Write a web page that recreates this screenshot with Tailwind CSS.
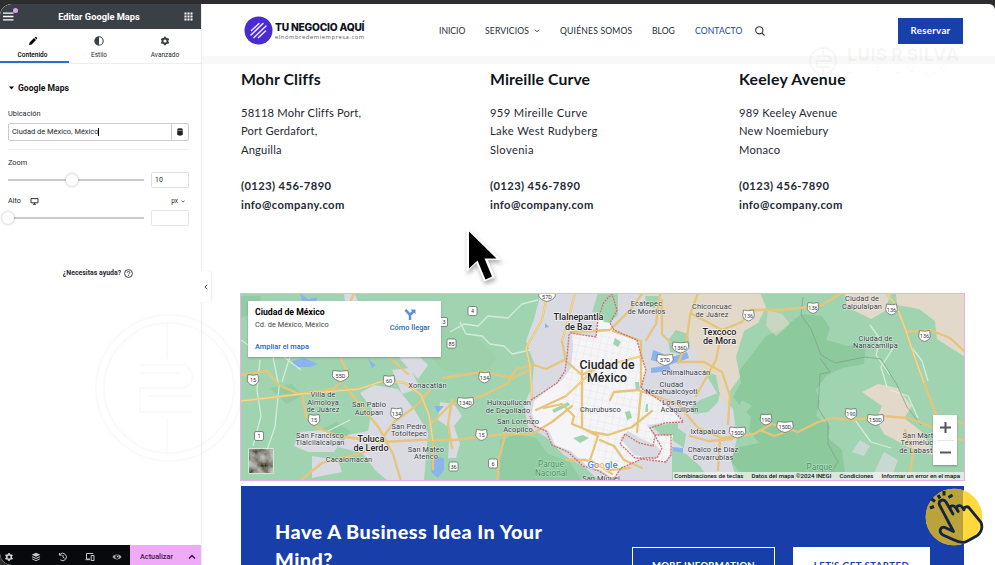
<!DOCTYPE html>
<html lang="es">
<head>
<meta charset="utf-8">
<title>Editar Google Maps</title>
<script src="https://cdn.jsdelivr.net/npm/@tailwindcss/browser@4"></script>
</head>
<body class="bg-[#2d2d2f] overflow-hidden">
<div class="relative w-[995px] h-[565px] overflow-hidden font-['Roboto',sans-serif] flex flex-col pt-1">
<div class="flex flex-1 min-h-0 rounded-l-[12px] rounded-tr-[6px] overflow-hidden bg-white">

<!-- Editor panel -->
<aside class="w-[201px] shrink-0 flex flex-col bg-white text-[#26292d] text-[7px] mt-[-4px]">
  <header class="h-[29px] shrink-0 bg-[#3b4046] rounded-tl-[12px] flex items-center justify-between pl-[3px] pr-2 pt-1 text-white">
    <svg class="w-[11px] h-[9px]" viewBox="0 0 11 9" stroke="#fff" stroke-width="1.3"><path d="M0 1.2h10.500M0 4.500h10.500M0 7.800h10.500"/></svg>
    <h1 class="text-[9.300px] font-bold leading-none">Editar Google Maps</h1>
    <svg class="w-[9px] h-[9px]" viewBox="0 0 9 9" fill="#fff"><path d="M.5.5h2v2h-2zM3.500.5h2v2h-2zM6.500.5h2v2h-2zM.5 3.500h2v2h-2zM3.500 3.500h2v2h-2zM6.500 3.500h2v2h-2zM.5 6.500h2v2h-2zM3.500 6.500h2v2h-2zM6.500 6.500h2v2h-2z"/></svg>
  </header>
  <nav class="h-[35px] shrink-0 grid grid-cols-[69px_60px_72px] border-b border-[#eeeeef] text-[6.500px] text-center">
    <div class="border-b-2 border-[#2f6fcb] flex flex-col items-center pt-[7px] gap-[5px] font-medium text-black pr-1">
      <svg class="w-[10px] h-[10px]" viewBox="0 0 10 10"><path d="M1 9l.6-2.600L6 2l2 2-4.400 4.400zM6.600 1.400l.6-.5c.4-.3.7-.3 1 0l.9.9c.3.3.3.7 0 1l-.6.6z"/></svg><span class="leading-[8px]">Contenido</span></div>
    <div class="flex flex-col items-center pt-[7px] gap-[5px]">
      <svg class="w-[10px] h-[10px]" viewBox="0 0 10 10"><circle cx="5" cy="5" r="4.200" fill="#fff" stroke="#3b4046" stroke-width="1.100"/><path d="M5 .8a4.200 4.200 0 0 0 0 8.400z" fill="#3b4046"/></svg><span class="leading-[8px]">Estilo</span></div>
    <div class="flex flex-col items-center pt-[7px] gap-[5px]">
      <svg class="w-[10px] h-[10px]" viewBox="0 0 10 10" fill="none" stroke="#3b4046"><circle cx="5" cy="5" r="2.500" stroke-width="1.900"/><path d="M5 .8v1.500M5 7.700v1.500M1.300 2.900l1.300.75M7.400 6.400l1.300.75M1.300 7.150l1.300-.75M7.400 3.650l1.300-.75" stroke-width="1.900"/></svg><span class="leading-[8px]">Avanzado</span></div>
  </nav>
  <section class="pl-2 pr-3 flex flex-col">
    <h2 class="mt-[19px] flex items-center gap-[3px] text-[8.600px] font-bold leading-[10px] text-[#111]"><svg class="w-[7px] h-[4px]" viewBox="0 0 7 4"><path d="M1 .5h5L3.500 3.500z"/></svg>Google Maps</h2>
    <label class="mt-[16px] leading-[9px] text-[7.400px]">Ubicación</label>
    <div class="mt-[5px] h-[18px] flex border border-[#c9cbcf] rounded-[2px]">
      <div class="flex-1 flex items-center pl-[3px] text-[7.450px] whitespace-nowrap">Ciudad de México, México<span class="w-px h-[8px] bg-black"></span></div>
      <div class="w-[17px] border-l border-[#c9cbcf] flex items-center justify-center">
        <svg class="w-[6px] h-[8px]" viewBox="0 0 6 8" fill="#222"><ellipse cx="3" cy="1.400" rx="2.800" ry="1.200"/><path d="M.2 2.300c1 .9 4.600.9 5.600 0v4.300c-.4 1.500-5.200 1.500-5.600 0z"/></svg></div>
    </div>
    <div class="mt-[8px] border-t border-[#f0f0f1]"></div>
    <label class="mt-[8px] leading-[9px] text-[7.400px]">Zoom</label>
    <div class="mt-[5px] h-[16px] flex items-center gap-[7px]">
      <div class="w-[136px] h-[2px] bg-[#cbcbcc] flex items-center pl-[58px]"><span class="w-[12px] h-[12px] shrink-0 rounded-full bg-white shadow-[0_0_3px_rgba(0,0,0,.32)]"></span></div>
      <div class="flex-1 h-[16px] border border-[#dedfe1] rounded-[2px] flex items-center pl-[3px] text-[7px]">10</div>
    </div>
    <div class="mt-[8px] h-[11px] flex items-center text-[7.300px]"><span>Alto</span>
      <svg class="ml-[9px] w-[9px] h-[7px]" viewBox="0 0 9 7" fill="none" stroke="#333"><path d="M1 .6h7v4.200H1zM3 6.300h3M4.500 5v1.300"/></svg>
      <span class="ml-auto mr-[4px] text-[6.500px] flex items-center gap-[3px]">px <svg class="w-[4px] h-[3px]" viewBox="0 0 4 3" fill="none" stroke="#333" stroke-width=".8"><path d="M.5.7L2 2.100 3.500.7"/></svg></span></div>
    <div class="mt-[3px] h-[16px] flex items-center gap-[7px]">
      <div class="w-[136px] h-[2px] bg-[#cbcbcc] flex items-center"><span class="ml-[-6px] w-[12px] h-[12px] shrink-0 rounded-full bg-white shadow-[0_0_3px_rgba(0,0,0,.32)]"></span></div>
      <div class="flex-1 h-[16px] border border-[#e4e5e7] rounded-[2px]"></div>
    </div>
  </section>
  <div class="mt-[42px] flex items-center justify-center gap-[3px] text-[6.950px] font-bold pr-[5px] leading-[10px]">¿Necesitas ayuda?
    <svg class="w-[9px] h-[9px]" viewBox="0 0 9 9" fill="none" stroke="#333" stroke-width=".9"><circle cx="4.500" cy="4.500" r="3.900"/><path d="M3.200 3.700c0-1.700 2.600-1.600 2.600 0 0 .9-1.300.9-1.300 1.700M4.500 6v.9"/></svg></div>
  <footer class="mt-auto h-[20px] bg-[#08090c] rounded-bl-[8px] flex overflow-hidden">
    <div class="w-[130px] flex items-center gap-[17px] pl-[4px] pt-[4px]">
      <svg class="w-[10px] h-[10px] shrink-0" viewBox="0 0 10 10" fill="none" stroke="#d5d8dc"><circle cx="5" cy="5" r="2.300" stroke-width="1.500"/><path d="M5 1v1.500M5 7.500V9M1.500 3l1.300.75M7.200 6.250l1.300.75M1.500 7l1.300-.75M7.200 3.750L8.500 3" stroke-width="1.600"/></svg>
      <svg class="w-[10px] h-[10px] shrink-0" viewBox="0 0 10 10" fill="#c5c8cc"><path d="M5 .8l4.300 2L5 4.800.7 2.800zM1.500 4.300L5 6l3.500-1.700.8.6L5 7 .7 4.900zM1.500 6.500L5 8.200l3.500-1.700.8.6L5 9.300.7 7.100z"/></svg>
      <svg class="w-[10px] h-[10px] shrink-0" viewBox="0 0 10 10" fill="none" stroke="#c5c8cc"><path d="M2 2.500A3.700 3.700 0 1 1 2.300 7.800M1.500 1v2.200h2.200M5 3v2.300l1.500 1"/></svg>
      <svg class="w-[10px] h-[10px] shrink-0" viewBox="0 0 10 10" fill="none" stroke="#c5c8cc"><path d="M8 2V1.500H1.500v5.500H5M.5 7.700H5M6.200 3.500h2.800v5H6.200z"/></svg>
      <svg class="w-[10px] h-[10px] shrink-0" viewBox="0 0 10 10"><path d="M.5 5C2.500 1.800 7.500 1.800 9.500 5 7.500 8.200 2.500 8.200.5 5z" fill="#a9acb0"/><circle cx="5" cy="5" r="1.900" fill="#17181a"/><circle cx="5.500" cy="4.500" r=".8" fill="#bbb"/></svg>
    </div>
    <div class="flex-1 bg-[#efabf7] flex items-center text-[7.300px] font-medium text-[#3b1743] pt-[4px]"><span class="w-[53px] text-center">Actualizar</span>
      <svg class="ml-[5px] w-[8px] h-[6px]" viewBox="0 0 8 6" fill="none" stroke="#3b1743" stroke-width="1.500"><path d="M1 4.500l3-3 3 3"/></svg></div>
  </footer>
</aside>

<!-- Site preview -->
<main class="flex-1 min-w-0 flex flex-col border-l border-[#ececef] font-['Lato',sans-serif] text-[#1f2933]">
  <header class="h-[52px] shrink-0 flex items-center pl-[42px] pr-8">
    <svg class="w-[29px] h-[29px] shrink-0" viewBox="0 0 29 29"><circle cx="14.500" cy="14.500" r="14" fill="#4a2bd0"/><g stroke="#efeafc" stroke-width="1.500" stroke-linecap="round"><path d="M7.500 14.500l7.500-7M7 19L19 7.500M10 21.500L22 10M14.500 21.500l7-6.500"/></g></svg>
    <div class="ml-[2px] w-[91px] whitespace-nowrap">
      <div class="mt-px text-[10.200px] font-extrabold leading-[12px] text-[#0d1220] tracking-[-0.2px] font-['Inter',sans-serif]">TU NEGOCIO AQUÍ</div>
      <div class="text-[5.800px] leading-[8px] tracking-[0.560px] text-[#555] font-['Open_Sans',sans-serif]">elnombredemiempresa.com</div>
    </div>
    <nav class="mt-[2px] ml-[73px] flex items-center text-[8.600px] leading-none text-[#252c34] whitespace-nowrap">
      <span class="w-[46px]">INICIO</span>
      <span class="w-[75px] flex items-center gap-[5px] tracking-[.15px]">SERVICIOS <svg class="w-[6px] h-[4px]" viewBox="0 0 6 4" fill="none" stroke="#444"><path d="M1 .8l2 2 2-2"/></svg></span>
      <span class="w-[92px] tracking-[.18px]">QUIÉNES SOMOS</span><span class="w-[43px]">BLOG</span><span class="w-[60px] tracking-[.1px] text-[#1b46ad]">CONTACTO</span>
      <svg class="w-[10px] h-[10px]" viewBox="0 0 10 10" fill="none" stroke="#333" stroke-width="1.100"><circle cx="4.300" cy="4.300" r="3.600"/><path d="M7 7l2.500 2.500"/></svg>
    </nav>
    <div class="mt-px ml-auto w-[65px] h-[26px] bg-[#1840ab] text-white font-bold text-[9.700px] tracking-[.3px] flex items-center justify-center">Reservar</div>
  </header>
  <div class="h-[8px] shrink-0 bg-[#f8f8f9]"></div>

  <section class="h-[229px] shrink-0 pl-[39px] grid grid-cols-[249px_249px_1fr] content-start text-[11.200px] leading-[18.400px] tracking-[.16px]">
    <div><h2 class="mt-[5px] mb-[15px] text-[15.800px] leading-[20px] font-bold tracking-[.1px] text-[#10151c]">Mohr Cliffs</h2><p>58118 Mohr Cliffs Port,<br>Port Gerdafort,<br>Anguilla</p><p class="mt-[18px] font-bold tracking-[.4px]">(0123) 456-7890<br>info@company.com</p></div>
    <div><h2 class="mt-[5px] mb-[15px] text-[15.800px] leading-[20px] font-bold tracking-[.1px] text-[#10151c]">Mireille Curve</h2><p class="tracking-[.38px]">959 Mireille Curve<br>Lake West Rudyberg<br>Slovenia</p><p class="mt-[18px] font-bold tracking-[.4px]">(0123) 456-7890<br>info@company.com</p></div>
    <div><h2 class="mt-[5px] mb-[15px] text-[15.800px] leading-[20px] font-bold tracking-[.25px] text-[#10151c]">Keeley Avenue</h2><p class="tracking-[.22px]">989 Keeley Avenue<br>New Noemiebury<br>Monaco</p><p class="mt-[18px] font-bold tracking-[.4px]">(0123) 456-7890<br>info@company.com</p></div>
  </section>

  <!-- Map: user units are window pixels -->
  <section class="relative ml-[38px] w-[725px] h-[188px] shrink-0 overflow-hidden font-['Roboto',sans-serif]">
    <svg class="block w-[725px] h-[188px]" viewBox="240 293 725 188">
      <defs>
        <pattern id="streets" width="7" height="7" patternUnits="userSpaceOnUse" patternTransform="rotate(12)"><path d="M0 0h7M0 0v7" stroke="#dedfe4" stroke-width=".7"/></pattern>
        <filter id="grain" x="0" y="0" width="1" height="1"><feTurbulence type="fractalNoise" baseFrequency=".13" numOctaves="3" seed="4"/><feColorMatrix values=".8 0 0 0 -.1 .8 0 0 0 -.11 .8 0 0 0 -.14 0 0 0 0 1"/></filter>
        <path id="sh" d="M-5-5.500q5 1.500 10 0l.8 5.500q-.5 4-5.800 5.500q-5.300-1.500-5.800-5.500z" fill="#fff" stroke="#66706a" stroke-width=".8"/>
        <path id="shw" d="M-7.500-5.500q7.500 1.500 15 0l.8 5.500q-2 4-8.300 5.500q-6.300-1.500-8.300-5.500z" fill="#fff" stroke="#66706a" stroke-width=".8"/>
        <rect id="sq" x="-4.500" y="-4.500" width="9" height="9" rx="1.500" fill="#fff" stroke="#66706a" stroke-width=".8"/>
      </defs>
      <rect x="240" y="293" width="725" height="188" fill="#a0d4b0"/>
      <g fill="#8cc99c">
        <path d="M766 336l14-6 22-16 20 2 8 12-4 12 22 6 18-2-2 20-22 4-16 8-10 14 4 12-4 14 14 10-2 12 14 12 4 31H735l4-10-10-12 10-12 20-4-10-12 2-14-8-8-10-12 8-14-2-12z"/>
        <path d="M500 440l18-6 18 4 12 16 22 8 12 19h-82zM270 388l22-4 10 12-16 8zM315 432l22-10 14 10-14 12zM241 296l20 0-4 16-16 6z" opacity=".7"/>
        <path d="M410 330l35-4 28 8 25 24-18 18-38-6z" opacity=".2"/>
      </g>
      <g fill="#d9dae2">
        <path d="M541 293h122l12 22 28 12 14 24-12 22 12 20 16 16 4 30-6 22 6 20H600l-16-14-20-12-18-18-18-10-4-22 8-18 2-24-8-22 8-22z"/>
        <path d="M360 393l14-8 24 4 16 20 14 24-4 48h-36l-12-10-14-18-24-6 10-12 20-4 4-22zM392 370l18-2 10 20-18 6zM300 432l22-2 20 10-8 12-26 0-14-6zM440 402l14 2 8 12-8 10 6 18-4 14h-8l2-30-12-8zM344 293h10l6 12-14 6zM312 456l26 4 4 12-30 6zM396 343l18 8 14 14-10 14-18-20z"/>
        <path d="M884 452l14 8-8 21h-20zM860 440l10 6-6 10-12-4z" opacity=".7"/>
      </g>
      <g fill="#e2d9ca">
        <path d="M642 293h118l6 14-8 16-14 8-8 26 4 20-10 14-2 16-8-10-4-22-14-4-6-20-12-14-20-8-12-16z"/>
        <path d="M845 293h46l-6 18-14 8-24-12zM896 293h69v64l-28-18-2-18-16-12-22-4zM862 392l16-8 20 4 14 18-8 12 18 14 14 24-26-8-26-14-8-14 6-14z"/>
        <path d="M768 310l14 4 8 10-14 12-10-10z" opacity=".6"/>
      </g>
      <g fill="#a0d4b0"><path d="M598 293l20 0 0 22-8 7-6-8-12-2zM668 340l8-10 12 4 2 12-10 8-10-2zM690 408l10-8 20-8-2 10-10 10-14 2zM652 426l20-2 14 10-2 14-12-8-12-6zM672 450l14 4 14 12 10 15-38 0zM645 296l14 0-4 12-8-2zM742 400l10 6-8 8-6-6z"/></g>
      <path d="M572 334l24 3 2-18 6-17 8-8 5 16-7 13 4 7 23 10 4 15 5 15-5 18 29 19 13 13-36 5 6 10 20 0-3 20-6 7-23-3-22 10-5 10-13-9-15-5-15-14-16-6-6-14-13-6-4-12 2-12 16-13 12-8 9-12 2-22z" fill="#f5f5f7"/>
      <path d="M604 302l8-8 5 16-7 13-6-1-5-4z" fill="#a0d4b0"/>
      <path d="M572 334l24 3 17-7 24 10 4 15 5 15-5 18 29 19 13 13-36 5 6 10 20 0-3 20-6 7-23-3-22 10-18-9-40-60 10-42z" fill="url(#streets)"/>
      <path d="M541 293h55l-4 38-24 9-6 40-30 18 2-60z" fill="url(#streets)" opacity=".4"/>
      <g fill="#a0d4b0"><path d="M615 338l6 4-3 5-5-3zM635 382l4 0 1 9-4 0zM573 438l10-3 6 3-9 5zM646 404l2 0 0 8-3 0zM552 410l16-8 2 3-16 8zM625 412l5-1 2 7-5 2zM662 425l16-2 0 6-12 2z"/></g>
      <path d="M620 438l8-7 14 8 14 6 6 8-8 6-20-4z" fill="#dadae2"/>
      <g fill="#8ab4ec"><path d="M292 361l12-3 14 6-8 3-15 0zM368 359l8 6-4 3zM434 406l10 0-6 7zM432 456l12 2 0 12-6 8-7-6zM653 350l8 3 8 5 18-6 2 6-20 7-18-5zM651 368l18-3 2 6-20 2zM672 447l11 1 0 5-10-2zM300 293l8 6 10-2-2 4-14 0zM545 323l4 4-4 1z"/></g>
      <g fill="none" stroke="#e6f3ea" stroke-width="1.300" opacity=".75" stroke-linejoin="round">
        <path d="M260 360l-3 30 4 26-8 30M273 357l6 30-4 40-14 40M292 350l-10 32M450 332l14-8 14 2 10-10 20 2 14-14 16-4M460 322l6 12 16 2 8 8 14 2 8 8 18-4M870 325l10 14-4 16 14 20M895 345l-14 22 6 20M910 345l12 16 6 20M890 390l18 6 10 22M855 420l16 22 20 6M241 340l20 14 22 2 18 14M350 420l-40 20"/>
      </g>
      <g fill="none" stroke="#84a08d" stroke-width=".8"><path d="M803 297l-2 18 10 14 10 26 14 8 30-6 16 2 16 26 10 22 14 18M820 358l10 14-10 2-2 34 10 16 0 20 10 18-8 12"/></g>
      <g fill="none" stroke="#e6c57a" stroke-width="2.300" stroke-linejoin="round" stroke-linecap="round">
        <path d="M241 375l26-4 12 14 20 9 60-5 24-8 22 2 16 12 8 20 4 26 0 28M241 401l60-7 32-5 16-14-8-16-2-10M302 394l4 22 12 12 20 8 44 6 38-2 34 0 50-6 28 0 20-12 20-16"/>
        <path d="M345 386l16 20 18 22 14 26 8 27M430 390l-14 16-22 16-10 14M300 481l22-18 40-10 20-8M354 293l-8 20M388 356l20 18M430 425l20-20 34-10 24-12 8-14 18-4 12 4 20-10M443 378l40-6 30 6 16-8 4-4"/>
        <path d="M546 300l-4 20-16 28 4 18 2 34M575 293l-6 24-7 24 4 20 16 14 12-6M536 410l30-14 30-28 46-12M544 408l18-4 12 12-2 8 20 8 16 3 24-8 20-16M582 368l0 30 0 30 16 8-8 24 22 14"/>
        <path d="M570 332l40-2 20-20 12-16M613 331l28 10 0 46M641 392l-4 40M610 400l4-8 24-2 40 14 20 24 24 10 32-4 18-10 26 8 20-10 14-4 20 2 30-4 26 2 22 8 22 12 20 4 25 0M690 436l18 5 24-2 10-8M646 340l10-16 4-30M662 300l0 34 8 8M600 440l14 6 10 14 18 8"/>
        <path d="M698 293l-8 22-4 30-8 18M692 314l30 16-6 30-20 36M680 362h24l18 10 8 24-2 28M722 330l20-8 8-12 30 0 40-4 20-12 16-3M760 430l14 6 18-6M886 293l10 12 10 26 8 24 10 28 14 36M906 332l24-2 20 8 15 14M905 430l8 24-4 27M945 418l20 6M720 440l-2 30M566 460l20 0 24 10 20-2M505 435l-6 24-2 22M452 400l-4 24 4 24"/>
      </g>
      <g fill="none" stroke="#f7da98" stroke-width="1"><path d="M566 396l30-28 46-12M546 300l-4 20-16 28 4 18 2 34M575 293l-6 24-7 24M383 381l22 2 16 12 8 20 4 26M886 293l10 12 10 26 8 24 10 28M241 401l60-7 58-5 24-8"/></g>
      <path d="M531 400l14-9 12-8 8-12 2-14 2-22 2-2 25 4 2-18 6-17 8-8 5 16-7 13 4 7 23 10 4 15 5 15-5 18 29 19 13 14M683 422l-18 1-15 5 5 7 16 0 0 20-5 7-24-3-21 9-8 12-14-9-16-5-15-14-16-7-6-14-12-5-4-10M620 444l5-10 14 9 14 3 2-10 7 12-5 10-22 0z" fill="none" stroke="#cf6f6f" stroke-width="1.300" stroke-dasharray="2 1"/>

      <g font-size="5.500" text-anchor="middle" fill="#333">
        <use href="#sh" x="253" y="380"/><text x="253" y="382">15</text>
        <use href="#shw" x="340.500" y="376"/><text x="340.500" y="378">55D</text>
        <use href="#sh" x="389" y="381"/><text x="389" y="383">60</text>
        <use href="#sh" x="314" y="420"/><text x="314" y="422">15</text>
        <use href="#sh" x="396.500" y="413.500"/><text x="396.500" y="415.500">134</text>
        <use href="#sq" x="259" y="436"/><text x="259" y="438">1</text>
        <use href="#sq" x="472.500" y="311"/><text x="472.500" y="313">4</text>
        <use href="#sq" x="443" y="322"/><text x="444" y="324">3</text>
        <use href="#sq" x="451.500" y="343.500"/><text x="451.500" y="345.500">85</text>
        <use href="#sh" x="484.500" y="377.500"/><text x="484.500" y="379.500">134</text>
        <use href="#shw" x="465.500" y="403"/><text x="465.500" y="405">134D</text>
        <use href="#sh" x="481.500" y="435"/><text x="481.500" y="437">15</text>
        <use href="#sq" x="453.500" y="466.500"/><text x="453.500" y="468.500">36</text>
        <use href="#sq" x="493" y="463.500"/><text x="493" y="465.500">6</text>
        <use href="#shw" x="547" y="296"/><text x="547" y="299">57D</text>
        <use href="#sh" x="748.500" y="315.500"/><text x="748.500" y="317.500">136</text>
        <use href="#shw" x="680.500" y="347.500"/><text x="680.500" y="349.500">136D</text>
        <use href="#shw" x="665" y="360"/><text x="665" y="362">57D</text>
        <use href="#sh" x="766" y="419.500"/><text x="766" y="421.500">190</text>
        <use href="#shw" x="737.500" y="432.500"/><text x="737.500" y="434.500">150D</text>
        <use href="#shw" x="785" y="427"/><text x="785" y="429">150D</text>
        <use href="#sh" x="813" y="308"/><text x="813" y="310">136</text>
        <use href="#sh" x="891.500" y="309.500"/><text x="891.500" y="311.500">136</text>
        <use href="#sh" x="924.500" y="336"/><text x="924.500" y="338">136</text>
        <use href="#sh" x="851" y="414"/><text x="851" y="416">190</text>
        <use href="#shw" x="875.500" y="420"/><text x="875.500" y="422">150D</text>
      </g>
      <g font-size="7.400" text-anchor="middle" fill="#33383d" stroke="#fff" stroke-opacity=".6" stroke-width="1.200" stroke-linejoin="round" paint-order="stroke" letter-spacing=".12">
        <text x="427.500" y="387.500">Xonacatlán</text>
        <text x="323" y="397">Villa de</text><text x="323" y="404.500">Almoloya</text><text x="323" y="412">de Juárez</text>
        <text x="369" y="407">San Pablo</text><text x="369" y="414.500">Autopan</text>
        <text x="409" y="428.500">San Pedro</text><text x="409" y="436">Totoltepec</text>
        <text x="320" y="437.500">San Francisco</text><text x="320" y="445">Tlalcilalcalpan</text>
        <text x="349" y="462">Cacalomacán</text>
        <text x="426" y="451.500">San Mateo</text><text x="426" y="459">Atenco</text>
        <text x="509" y="405">Huixquilucan</text><text x="508" y="412.500">de Degollado</text>
        <text x="518" y="424">San Lorenzo</text><text x="518" y="431.500">Acopilco</text>
        <text x="600.500" y="411.500">Churubusco</text><text x="601" y="481">San Miguel</text>
        <text x="646.500" y="306">Ecatepec</text><text x="646.500" y="313.500">de Morelos</text>
        <text x="712" y="309">Chiconcuac</text><text x="712" y="316.500">de Juárez</text>
        <text x="686" y="374.500">Chimalhuacán</text>
        <text x="671.500" y="386.500">Ciudad</text><text x="671.500" y="394">Nezahualcóyotl</text>
        <text x="679.500" y="404.500">Los Reyes</text><text x="679.500" y="412">Acaquilpan</text>
        <text x="708" y="433.500">Ixtapaluca</text>
        <text x="713" y="452">Chalco de Díaz</text><text x="713" y="459.500">Covarrubias</text>
        <text x="862" y="301">Ciudad de</text><text x="862" y="308.500">Calpulalpan</text>
        <text x="875.500" y="340.500">Ciudad de</text><text x="875.500" y="348">Nanacamilpa</text>
        <text x="921" y="437.500">San Martín</text><text x="921" y="445">Texmelucan</text><text x="921" y="452.500">de Labastida</text>
      </g>
      <g font-size="8.200" text-anchor="middle" fill="#3d8a58" stroke="#c5ead0" stroke-width=".8" paint-order="stroke"><text x="551" y="467">Parque</text><text x="551" y="476">Nacional</text><text x="819.500" y="470">Parque</text></g>
      <g font-size="9" font-weight="500" text-anchor="middle" fill="#202124" stroke="#fff" stroke-opacity=".75" stroke-width="1.500" paint-order="stroke">
        <text x="578.500" y="320">Tlalnepantla</text><text x="578.500" y="329.500">de Baz</text>
        <text x="719.500" y="334.500">Texcoco</text><text x="719.500" y="344">de Mora</text>
        <text x="371" y="441.500">Toluca</text><text x="371" y="451">de Lerdo</text>
        <text x="607" y="369" font-size="12.300">Ciudad de</text><text x="607" y="381.500" font-size="12.300">México</text>
      </g>
      <text x="602.500" y="468" text-anchor="middle" font-size="9.500" font-weight="500" stroke="#fff" stroke-width="1.200" paint-order="stroke"><tspan fill="#4285f4">G</tspan><tspan fill="#ea6e60">o</tspan><tspan fill="#f0bb38">o</tspan><tspan fill="#4285f4">g</tspan><tspan fill="#4aa564">l</tspan><tspan fill="#4285f4">e</tspan></text>
      <rect x="248.500" y="448.500" width="25" height="25" fill="#fff"/><rect x="249.500" y="449.500" width="23" height="23" filter="url(#grain)"/>
      <rect x="673" y="472" width="292" height="8" fill="#f1f3f1" opacity=".75"/>
    </svg>
    <div class="absolute right-[5px] bottom-[1px] flex gap-[8px] text-[6.150px] leading-[8px] font-medium text-[#111] whitespace-nowrap"><span>Combinaciones de teclas</span><span>Datos del mapa ©2024 INEGI</span><span>Condiciones</span><span>Informar un error en el mapa</span></div>
    <div class="absolute left-[8px] top-[8px] w-[193px] h-[56px] bg-white shadow-[0_1px_2px_rgba(0,0,0,.25)] flex justify-between pl-[7px] pr-[11px] pt-[6px]">
      <div class="flex flex-col"><b class="text-[8.700px] leading-[11px] text-black font-bold">Ciudad de México</b><span class="mt-[2px] text-[7.400px] leading-[9px] text-[#444]">Cd. de México, México</span><span class="mt-[13px] text-[7.400px] leading-[9px] font-medium text-[#1a69b8]">Ampliar el mapa</span></div>
      <div class="flex flex-col items-center text-[7.450px] leading-[9px] font-medium text-[#1a69b8]"><svg class="mt-[1px] mb-[3px] w-[12px] h-[12px]" viewBox="0 0 12 12"><path d="M.5 2.800L2.500 1 6 5l2-2-1.300-1.500H11.500V6L10 4.700 7.200 7.500V12H4.800V7.500z" fill="#5b8de0"/></svg>Cómo llegar</div>
    </div>
    <div class="absolute right-[8px] top-[122px] w-[24px] h-[50px] bg-white shadow-[0_1px_2px_rgba(0,0,0,.3)] flex flex-col items-center pt-[7px]">
      <svg class="w-[11px] h-[11px]" viewBox="0 0 11 11" stroke="#555" stroke-width="2"><path d="M5.500 0v11M0 5.500h11"/></svg>
      <span class="mt-[7px] w-[17px] h-px bg-[#e6e6e6]"></span>
      <svg class="mt-[6px] w-[11px] h-[11px]" viewBox="0 0 11 11" stroke="#555" stroke-width="2"><path d="M0 5.500h11"/></svg>
    </div>
    <div class="absolute inset-0 border border-[#e6b3e8]"></div>
  </section>

  <section class="mt-[5px] ml-[39px] w-[723px] flex-1 min-h-0 overflow-hidden bg-[#183fa9] flex">
    <h2 class="pl-[34px] pt-[31px] w-[391px] shrink-0 whitespace-nowrap text-white font-black text-[19.800px] leading-[28px] tracking-[.48px]">Have A Business Idea In Your<br>Mind?</h2>
    <div class="mt-[61px] flex gap-[18px] text-[9.500px] font-bold tracking-[.3px] whitespace-nowrap">
      <div class="w-[143px] h-[38px] border border-white text-white flex items-center justify-center">MORE INFORMATION</div>
      <div class="w-[137px] h-[38px] bg-white text-[#183fa9] flex items-center justify-center tracking-[.5px]">LET'S GET STARTED</div>
    </div>
  </section>
</main>
</div>

<!-- Overlays -->
<span class="absolute left-[13px] top-[8px] w-[5px] h-[5px] rounded-full bg-[#dfa4ee]"></span>
<div class="absolute left-[201px] top-[271px] w-[10px] h-[31px] bg-white rounded-r-[3px] shadow-[1px_0_2px_rgba(0,0,0,.08)] flex items-center justify-center"><svg class="w-[4px] h-[6px]" viewBox="0 0 4 6" fill="none" stroke="#444"><path d="M3 .8L1 3l2 2.200"/></svg></div>
<svg class="absolute left-[92px] top-[308px] w-[148px] h-[160px]" viewBox="0 0 148 160" fill="none" stroke="#80509a" stroke-opacity=".035" stroke-width="2"><circle cx="77" cy="80" r="73"/><circle cx="77" cy="80" r="65"/><path d="M48 57h44a12 12 0 0 1 0 23H48v24h52M48 65h40M56 88h44M75 15v36M75 110v36"/></svg>
<div class="absolute left-[808px] top-[46px] flex gap-[9px] items-center text-[rgba(0,0,0,0.03)] whitespace-nowrap font-['Inter',sans-serif]">
  <svg class="w-[30px] h-[30px]" viewBox="0 0 30 30" fill="none" stroke="#000" stroke-opacity=".03" stroke-width="2"><circle cx="15" cy="15" r="13"/><path d="M9 10h10q4 0 4 5H9v6h12M15 2v8M15 21v8"/></svg>
  <div><div class="text-[18px] leading-[18px] font-black">LUIS R SILVA</div><div class="text-[8px] leading-[12px] font-bold tracking-[2.500px]">LUISRSILVA.COM</div></div>
</div>
<svg class="absolute left-[458px] top-[222px] w-[50px] h-[66px] drop-shadow-[1px_3px_2px_rgba(0,0,0,.3)]" viewBox="458 222 50 66"><path d="M466.500 227.500v44.500l10-9 7.500 18.500 11-4-7-17.500h14z" fill="#fff"/><path d="M469 231.500v37l8.500-8 8 19 6.500-3-7.500-18h12z" fill="#000"/></svg>
<svg class="absolute left-[924px] top-[486px] w-[62px] h-[62px]" viewBox="924 486 62 62">
  <circle cx="954" cy="517" r="28.300" fill="#ffd83b"/><path d="M925.700 517A28.300 28.300 0 0 1 963 490.200v53.600A28.300 28.300 0 0 1 925.700 517z" fill="#bba33c"/>
  <path d="M953.500 531.500L939.500 505c-1.800-4.500 4-6.800 6.500-3l7 12-2.800-5c-.6-3.500 3.500-4 5-2l3 4.500-1.500-3c0-3.500 4-3.500 5.500-1.500l1.800 2.800c0-3.500 4-4 5.500-1.500l11.500 14c2 5 0 10-4 13.500l-10 5.500c-4 2.300-9 .8-14-1.700l-10-4.600c-5-3-2.500-9 2-7.500z" fill="none" stroke="#17223c" stroke-width="2.800" stroke-linejoin="round"/>
  <path d="M930 508l4-1.500M931.500 499l3.500 2.500M938 495l2 3.500M944 491v4.500M948.500 497.500l4-2.500" stroke="#17223c" stroke-width="3"/>
</svg>
</div>
</body>
</html>
